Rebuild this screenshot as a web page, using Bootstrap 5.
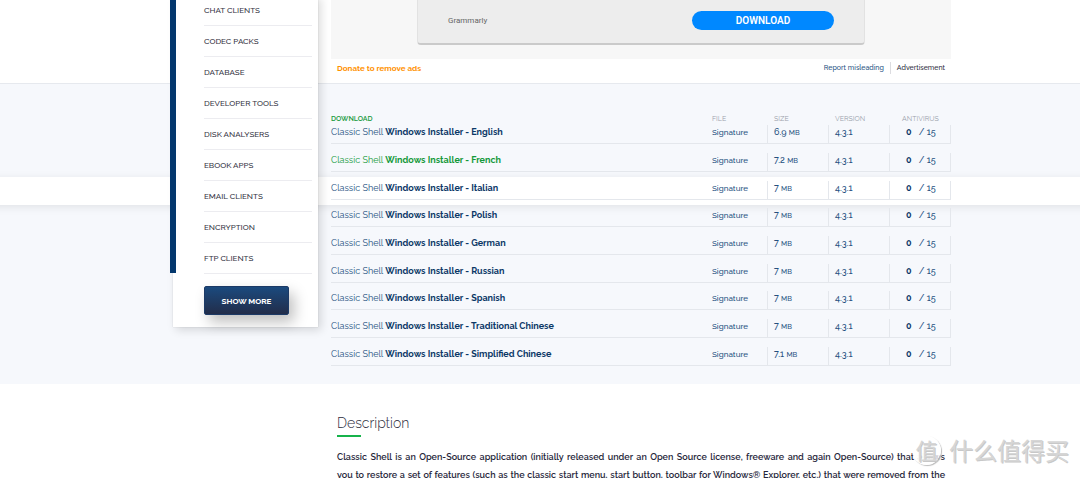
<!DOCTYPE html>
<html lang="en">
<head>
<meta charset="utf-8">
<meta name="viewport" content="width=device-width, initial-scale=1">
<title>Classic Shell - Download</title>
<link href="https://cdn.jsdelivr.net/npm/bootstrap@5.3.0/dist/css/bootstrap.min.css" rel="stylesheet">
<style>
  body { font-family: Raleway, Lato, "Liberation Sans", sans-serif; font-size: 9px; line-height: 18px; color: #2b2b3b; }
  a { color: #24507f; text-decoration: none; }
  .page-wrap { max-width: 822px; margin: 0 auto; width: 100%; }
  .content-col { margin-left: 202px; }

  .side-panel { position: absolute; top: 0; left: 0; right: 0; z-index: 3; pointer-events: none; }
  .side-box { position: relative; width: 145px; margin-left: 44px; padding: 0 6px 12px 31px; background: #fff; box-shadow: 3px 3px 9px rgba(0,0,0,.14), 0 0 1px rgba(0,0,0,.2); pointer-events: auto; }
  .cat-list { margin-top: -5px; }
  .side-box::before { content: ""; position: absolute; top: 0; left: -3px; width: 6px; height: 278px; background: #03376d; }
  .cat-list a { display: block; height: 31px; line-height: 30px; border-bottom: 1px solid #ececf0; color: #33333f; font-size: 8px; font-weight: 500; }
  .show-more { margin-top: 12px; width: 85px; height: 29px; padding: 0; border: 1px solid #1c3a66; border-radius: 2px; color: #fff; background: linear-gradient(#1b4a7e, #222d4a); font-size: 8px; line-height: 26px; font-weight: 700; box-shadow: 5px 7px 14px rgba(0,0,0,.25); }

  .ad-section { border-bottom: 1px solid #e6e9ee; padding-bottom: 5px; }
  .ad-area { background: #f7f7f7; padding: 0 86px 14px 86px; }
  .ad-card { background: #ededed; border: 1px solid #e2e2e2; border-top: 0; border-bottom: 2px solid #cacaca; border-radius: 0 0 4px 4px; padding: 11px 30px 13px; font-family: Roboto, sans-serif; font-size: 8px; color: #666; }
  .ad-button { width: 142px; height: 19px; padding: 0; border: 0; border-radius: 10px; background: #0088ff; color: #fff; font-size: 10px; font-weight: 600; line-height: 19px; }
  .ad-links { padding: 0 6px 1px; font-size: 7px; font-weight: 500; }
  .ad-links .donate { color: #ff9100; font-size: 8px; font-weight: 700; line-height: 17px; }
  .ad-links .report { padding-right: 6px; margin-right: 6px; border-right: 1px solid #dcdce0; line-height: 12px; }

  .dl-section { position: relative; z-index: 0; overflow: hidden; background: #f6f8fc; padding: 30px 0 18px; }
  .dl-table { width: 100%; table-layout: fixed; color: #24507f; line-height: 15px; }
  .dl-table th { height: 10px; padding: 0; font-size: 7px; line-height: 10px; font-weight: 400; color: #9a9fab; }
  .dl-table th.dl-name { color: #14983a; font-weight: 600; }
  .dl-table td { padding: 9px 0 0; height: 28px; border-bottom: 1px solid #e4e7ec; vertical-align: bottom; }
  .dl-table tbody tr:first-child td { padding-top: 1px; height: 19px; }
  .dl-table tbody tr:nth-child(3n+4) td { padding-top: 8px; height: 27px; }
  .dl-cell { height: 18px; border-right: 1px solid #e4e7ec; font-size: 9px; font-weight: 500; }
  .dl-cell a { font-size: 8px; }
  .dl-title { height: 18px; }
  .dl-title a { font-weight: 400; }
  .dl-title b { color: #0c3867; font-weight: 700; }
  .dl-title .visited, .dl-title .visited b { color: #14983a; }
  .dl-cell small { font-size: 7px; }
  .dl-cell b { color: #0c3867; font-weight: 700; margin-right: 5px; }
  .col-file { width: 56px; } .col-wide { width: 61px; }
  .dl-table .pad-l { padding-left: 6px; } .dl-table .pad-av { padding-left: 12px; }
  .dl-active .dl-title { position: relative; }
  .dl-active .dl-title::before { content: ""; position: absolute; z-index: -1; top: -4px; height: 28px; left: -100vw; width: 300vw; background: #fff; box-shadow: 0 2px 10px rgba(0,0,0,.09); }

  .desc { padding: 28px 6px 0; }
  .desc h2 { font-size: 14px; line-height: 22px; font-weight: 300; margin: 0; padding-bottom: 2px; }
  .desc h2::after { content: ""; display: block; width: 24px; height: 2px; margin-top: 1px; background: #16b34b; }
  .desc p { margin: 9px 0 0; line-height: 18px; font-weight: 600; color: #26263a; text-align: justify; text-align-last: justify; }

  .watermark { position: absolute; right: 11px; bottom: 12px; z-index: 4; font-family: "Noto Sans CJK SC", sans-serif; color: #d6d6d6; font-size: 24px; line-height: 32px; text-shadow: 1px 1px 0 #c8c8c8, -1px -1px 0 #fff; }
  .watermark-seal { width: 29px; height: 29px; line-height: 26px; border-radius: 50%; background: rgba(255,255,255,.75); box-shadow: 1px 1px 1px #bbb; text-align: center; font-size: 22px; }
</style>
</head>
<body class="bg-white vh-100 overflow-hidden position-relative">
<aside class="side-panel">
  <div class="page-wrap">
    <nav class="side-box" aria-label="Categories">
      <ul class="cat-list list-unstyled mb-0">
        <li><a href="#">CHAT CLIENTS</a></li>
        <li><a href="#">CODEC PACKS</a></li>
        <li><a href="#">DATABASE</a></li>
        <li><a href="#">DEVELOPER TOOLS</a></li>
        <li><a href="#">DISK ANALYSERS</a></li>
        <li><a href="#">EBOOK APPS</a></li>
        <li><a href="#">EMAIL CLIENTS</a></li>
        <li><a href="#">ENCRYPTION</a></li>
        <li><a href="#">FTP CLIENTS</a></li>
      </ul>
      <button type="button" class="btn show-more d-block">SHOW MORE</button>
    </nav>
  </div>
</aside>

<section class="ad-section">
  <div class="page-wrap"><div class="content-col">
    <div class="ad-area">
      <div class="ad-card d-flex justify-content-between align-items-center">
        <span>Grammarly</span>
        <button type="button" class="btn ad-button">DOWNLOAD</button>
      </div>
    </div>
    <div class="ad-links d-flex align-items-center">
      <a href="#" class="donate me-auto">Donate to remove ads</a>
      <a href="#" class="report">Report misleading</a>
      <span>Advertisement</span>
    </div>
  </div></div>
</section>

<section class="dl-section">
  <div class="page-wrap"><div class="content-col">
    <table class="dl-table">
      <colgroup><col><col class="col-file"><col class="col-wide"><col class="col-wide"><col class="col-wide"></colgroup>
      <thead><tr><th class="dl-name">DOWNLOAD</th><th>FILE</th><th class="pad-l">SIZE</th><th class="pad-l">VERSION</th><th class="pad-av">ANTIVIRUS</th></tr></thead>
      <tbody id="downloads"></tbody>
    </table>
  </div></div>
</section>

<section class="page-wrap"><div class="content-col desc">
  <h2>Description</h2>
  <p>Classic Shell is an Open-Source application (initially released under an Open Source license, freeware and again Open-Source) that allows<br>you to restore a set of features (such as the classic start menu, start button, toolbar for Windows® Explorer, etc.) that were removed from the</p>
</div></section>

<div class="watermark d-flex align-items-center gap-2">
  <span class="watermark-seal">值</span><span>什么值得买</span>
</div>

<script src="https://cdn.jsdelivr.net/npm/bootstrap@5.3.0/dist/js/bootstrap.bundle.min.js"></script>
<script>
  const files = [
    ["English", "6.9"], ["French", "7.2", "visited"], ["Italian", "7", "", "dl-active"],
    ["Polish", "7"], ["German", "7"], ["Russian", "7"], ["Spanish", "7"],
    ["Traditional Chinese", "7"], ["Simplified Chinese", "7.1"]
  ];
  document.getElementById("downloads").innerHTML = files.map(([lang, size, link = "", row = ""]) => `
    <tr class="${row}">
      <td><div class="dl-title"><a href="#" class="${link}">Classic Shell <b>Windows Installer - ${lang}</b></a></div></td>
      <td><div class="dl-cell"><a href="#">Signature</a></div></td>
      <td><div class="dl-cell pad-l">${size} <small>MB</small></div></td>
      <td><div class="dl-cell pad-l">4.3.1</div></td>
      <td><div class="dl-cell ps-3"><b>0</b> / 15</div></td>
    </tr>`).join("");
</script>
</body>
</html>
